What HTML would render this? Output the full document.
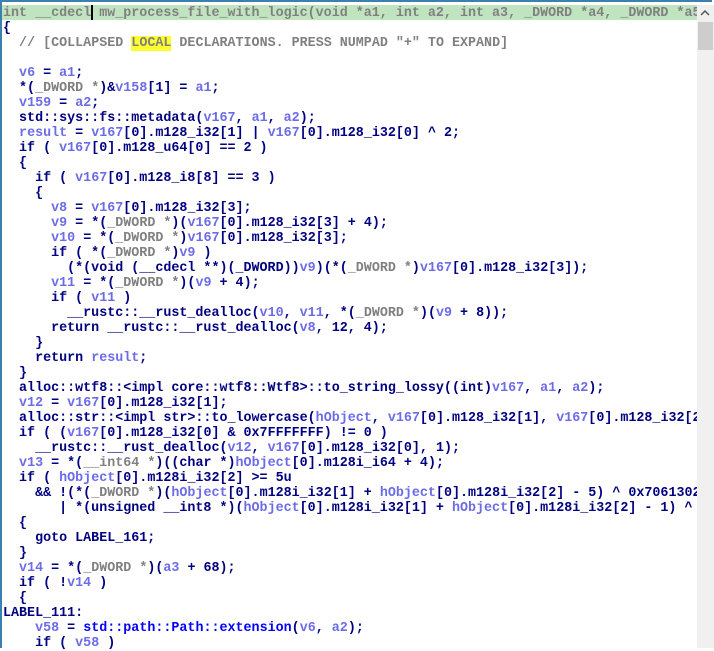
<!DOCTYPE html>
<html><head><meta charset="utf-8"><style>
body{margin:0;width:714px;height:648px;overflow:hidden;background:#fff;position:relative}
#frame{position:absolute;left:0;top:0;width:712px;height:648px;border-left:2px solid #3c7fb1;border-top:2px solid #3c7fb1;box-sizing:border-box}
#hdr{position:absolute;left:2px;top:5px;width:695px;height:15px;background:#c0e4c0}
pre{position:absolute;left:3px;top:6px;margin:0;font-family:"Liberation Mono",monospace;font-size:13.36px;line-height:15px;font-weight:bold;color:#000080;white-space:pre}
.v{color:#6c6ce8}.g{color:#808080}.f{color:#0000ff}.c{color:#808080}.y{background:#ffff30}.h{color:#808080}
#sb{position:absolute;left:697px;top:5px;width:17px;height:643px;background:#f0f0f0}
#th{position:absolute;left:698px;top:22px;width:15px;height:28px;background:#cdcdcd}
#cur{position:absolute;left:91px;top:5px;width:2px;height:15px;background:#000}
</style></head><body>
<div id="frame"></div>
<div id="hdr"></div>
<pre><span class="h">int __cdecl mw_process_file_with_logic(void *a1, int a2, int a3, _DWORD *a4, _DWORD *a5</span>
{
  <span class="c">// [COLLAPSED <span class="y">LOCAL</span> DECLARATIONS. PRESS NUMPAD "+" TO EXPAND]</span>

  <span class="v">v6</span> = <span class="v">a1</span>;
  *(<span class="g">_DWORD *</span>)&amp;<span class="v">v158</span>[1] = <span class="v">a1</span>;
  <span class="v">v159</span> = <span class="v">a2</span>;
  std::sys::fs::metadata(<span class="v">v167</span>, <span class="v">a1</span>, <span class="v">a2</span>);
  <span class="v">result</span> = <span class="v">v167</span>[0].m128_i32[1] | <span class="v">v167</span>[0].m128_i32[0] ^ 2;
  if ( <span class="v">v167</span>[0].m128_u64[0] == 2 )
  {
    if ( <span class="v">v167</span>[0].m128_i8[8] == 3 )
    {
      <span class="v">v8</span> = <span class="v">v167</span>[0].m128_i32[3];
      <span class="v">v9</span> = *(<span class="g">_DWORD *</span>)(<span class="v">v167</span>[0].m128_i32[3] + 4);
      <span class="v">v10</span> = *(<span class="g">_DWORD *</span>)<span class="v">v167</span>[0].m128_i32[3];
      if ( *(<span class="g">_DWORD *</span>)<span class="v">v9</span> )
        (*(void (__cdecl **)(_DWORD))<span class="v">v9</span>)(*(<span class="g">_DWORD *</span>)<span class="v">v167</span>[0].m128_i32[3]);
      <span class="v">v11</span> = *(<span class="g">_DWORD *</span>)(<span class="v">v9</span> + 4);
      if ( <span class="v">v11</span> )
        __rustc::__rust_dealloc(<span class="v">v10</span>, <span class="v">v11</span>, *(<span class="g">_DWORD *</span>)(<span class="v">v9</span> + 8));
      return __rustc::__rust_dealloc(<span class="v">v8</span>, 12, 4);
    }
    return <span class="v">result</span>;
  }
  alloc::wtf8::&lt;impl core::wtf8::Wtf8&gt;::to_string_lossy((int)<span class="v">v167</span>, <span class="v">a1</span>, <span class="v">a2</span>);
  <span class="v">v12</span> = <span class="v">v167</span>[0].m128_i32[1];
  alloc::str::&lt;impl str&gt;::to_lowercase(<span class="v">hObject</span>, <span class="v">v167</span>[0].m128_i32[1], <span class="v">v167</span>[0].m128_i32[2
  if ( (<span class="v">v167</span>[0].m128_i32[0] &amp; 0x7FFFFFFF) != 0 )
    __rustc::__rust_dealloc(<span class="v">v12</span>, <span class="v">v167</span>[0].m128_i32[0], 1);
  <span class="v">v13</span> = *(<span class="g">__int64 *</span>)((char *)<span class="v">hObject</span>[0].m128i_i64 + 4);
  if ( <span class="v">hObject</span>[0].m128i_i32[2] &gt;= 5u
    &amp;&amp; !(*(<span class="g">_DWORD *</span>)(<span class="v">hObject</span>[0].m128i_i32[1] + <span class="v">hObject</span>[0].m128i_i32[2] - 5) ^ 0x7061302
       | *(unsigned __int8 *)(<span class="v">hObject</span>[0].m128i_i32[1] + <span class="v">hObject</span>[0].m128i_i32[2] - 1) ^
  {
    goto LABEL_161;
  }
  <span class="v">v14</span> = *(<span class="g">_DWORD *</span>)(<span class="v">a3</span> + 68);
  if ( !<span class="v">v14</span> )
  {
LABEL_111:
    <span class="v">v58</span> = <span class="f">std::path::Path::extension</span>(<span class="v">v6</span>, <span class="v">a2</span>);
    if ( <span class="v">v58</span> )</pre>
<div id="cur"></div>
<div id="sb"></div><div id="th"></div>
<svg style="position:absolute;left:700px;top:9px" width="10" height="8"><path d="M1 6 L5 2 L9 6" stroke="#555" stroke-width="1.5" fill="none"/></svg>
</body></html>
